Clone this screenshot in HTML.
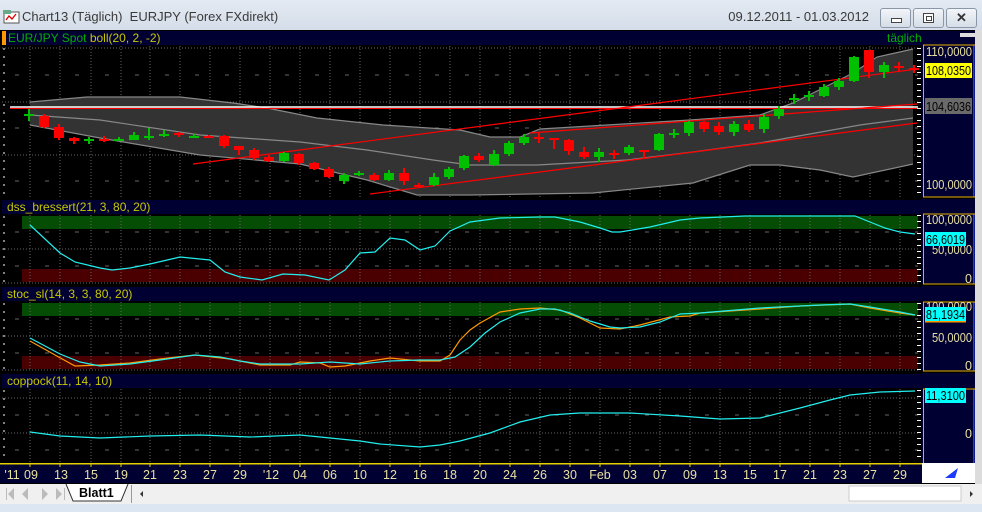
<!DOCTYPE html>
<html><head><meta charset="utf-8"><style>
body{margin:0;width:982px;height:512px;overflow:hidden;background:#dfe6ee;font-family:"Liberation Sans",sans-serif}
.t{position:absolute;left:0;top:0;width:982px;height:31px;background:linear-gradient(#e4eaf2,#d4dde9)}
.btn{position:absolute;top:8px;width:29px;height:18px;border:1px solid #8a97a8;border-radius:3px;background:linear-gradient(#f2f5f9,#d6dde7)}
</style></head><body>
<div class="t">
<svg style="position:absolute;left:3px;top:9px" width="18" height="16"><rect x="1" y="3" width="15" height="11" fill="#fff" stroke="#555"/><polyline points="3,11 6,7 9,10 13,5" fill="none" stroke="#d00" stroke-width="1.3"/><rect x="0" y="1" width="8" height="4" fill="#6a8"/></svg>
<div style="position:absolute;left:22px;top:9px;font-size:13px;color:#3a3a3a">Chart13 (Täglich)&nbsp; EURJPY (Forex FXdirekt)</div>
<div style="position:absolute;right:113px;top:9px;font-size:13px;color:#3a3a3a">09.12.2011 - 01.03.2012</div>
<div class="btn" style="left:880px"><div style="position:absolute;left:10px;top:9px;width:9px;height:3px;border:1px solid #444;background:#fff"></div></div>
<div class="btn" style="left:913px"><div style="position:absolute;left:9px;top:4px;width:9px;height:8px;border:1px solid #444;background:#fff"></div><div style="position:absolute;left:12px;top:7px;width:4px;height:3px;border:1px solid #444"></div></div>
<div class="btn" style="left:946px;font-size:13px;font-weight:bold;color:#333;text-align:center;line-height:18px">✕</div>
</div>
<svg style="position:absolute;left:0;top:30px" width="982" height="482" viewBox="0 30 982 482" font-family="Liberation Sans, sans-serif" font-size="12">
<rect x="0" y="30" width="982" height="454" fill="#000"/>
<rect x="975" y="30" width="7" height="454" fill="#dcdcdc"/>
<rect x="2" y="31" width="973" height="14" fill="#000033"/>
<rect x="2" y="31" width="4" height="14" fill="#f90"/>
<text x="8" y="42" fill="#00b000">EUR/JPY Spot <tspan fill="#c8c800">boll(20, 2, -2)</tspan></text>
<text x="887" y="42" fill="#00b000">täglich</text>
<rect x="960" y="33" width="15" height="4" fill="#ddd"/>
<rect x="2" y="200" width="920" height="14" fill="#000033"/>
<text x="7" y="211" fill="#c8c800">dss_bressert(21, 3, 80, 20)</text>
<rect x="2" y="287" width="920" height="14" fill="#000033"/>
<text x="7" y="298" fill="#c8c800">stoc_sl(14, 3, 3, 80, 20)</text>
<rect x="2" y="374" width="920" height="14" fill="#000033"/>
<text x="7" y="385" fill="#c8c800">coppock(11, 14, 10)</text>
<rect x="22" y="216" width="896" height="13" fill="#054d05"/>
<rect x="22" y="269" width="896" height="13" fill="#4a0000"/>
<rect x="22" y="303" width="896" height="13" fill="#054d05"/>
<rect x="22" y="356" width="896" height="13" fill="#4a0000"/>
<g stroke="#666" stroke-dasharray="1,2" stroke-width="1">
<path d="M30 46V198M60 46V198M91 46V198M121 46V198M150 46V198M180 46V198M210 46V198M240 46V198M270 46V198M300 46V198M330 46V198M360 46V198M390 46V198M420 46V198M450 46V198M480 46V198M510 46V198M540 46V198M570 46V198M600 46V198M630 46V198M660 46V198M690 46V198M720 46V198M750 46V198M780 46V198M810 46V198M840 46V198M870 46V198M900 46V198"/>
<path d="M30 215V284M60 215V284M91 215V284M121 215V284M150 215V284M180 215V284M210 215V284M240 215V284M270 215V284M300 215V284M330 215V284M360 215V284M390 215V284M420 215V284M450 215V284M480 215V284M510 215V284M540 215V284M570 215V284M600 215V284M630 215V284M660 215V284M690 215V284M720 215V284M750 215V284M780 215V284M810 215V284M840 215V284M870 215V284M900 215V284"/>
<path d="M30 302V371M60 302V371M91 302V371M121 302V371M150 302V371M180 302V371M210 302V371M240 302V371M270 302V371M300 302V371M330 302V371M360 302V371M390 302V371M420 302V371M450 302V371M480 302V371M510 302V371M540 302V371M570 302V371M600 302V371M630 302V371M660 302V371M690 302V371M720 302V371M750 302V371M780 302V371M810 302V371M840 302V371M870 302V371M900 302V371"/>
<path d="M30 389V462M60 389V462M91 389V462M121 389V462M150 389V462M180 389V462M210 389V462M240 389V462M270 389V462M300 389V462M330 389V462M360 389V462M390 389V462M420 389V462M450 389V462M480 389V462M510 389V462M540 389V462M570 389V462M600 389V462M630 389V462M660 389V462M690 389V462M720 389V462M750 389V462M780 389V462M810 389V462M840 389V462M870 389V462M900 389V462"/>
<path d="M2 48H918M2 102H918M2 155H918M2 249H918M2 283H918M2 336H918M2 370H918M2 398H918M2 433H918"/>
</g>
<g stroke="#666" stroke-dasharray="4,26" stroke-dashoffset="-13"><path d="M2 75H918M2 128H918M2 181H918M2 232H918M2 266H918M2 319H918M2 353H918M2 415H918M2 450H918"/></g>
<polygon points="30,102 87,97 180,97 233,103 267,108 317,118 383,125 460,130 490,137 520,137 540,129 690,120 760,115 793,103 853,73 877,57 913,49 913,164 853,177 820,170 780,165 750,165 693,183 593,193 470,195 417,195 367,180 300,164 200,155 100,138 30,125" fill="#333"/>
<g fill="none" stroke="#888" stroke-width="1.2">
<polyline points="30,102 87,97 180,97 233,103 267,108 317,118 383,125 460,130 490,137 520,137 540,129 690,120 760,115 793,103 853,73 877,57 913,49"/>
<polyline points="30,115 100,120 200,135 300,142 367,150 433,160 470,165 537,165 627,160 693,152 760,143 793,137 860,125 913,118"/>
<polyline points="30,125 100,138 200,155 300,164 367,180 417,195 470,195 593,193 693,183 750,165 780,165 820,170 853,177 913,164"/>
</g>
<line x1="10" y1="107" x2="918" y2="107" stroke="#fff" stroke-width="1.5"/>
<line x1="10" y1="108.5" x2="918" y2="108.5" stroke="#f00" stroke-width="1"/>
<g stroke="#f00" stroke-width="1.2">
<line x1="193" y1="164" x2="917" y2="69"/>
<line x1="370" y1="194" x2="917" y2="123"/>
<line x1="530" y1="133" x2="917" y2="104"/>
</g>
<g fill="#00c000" stroke="none">
<rect x="28" y="109" width="2" height="12"/><rect x="24" y="114" width="10" height="2"/>
<rect x="88" y="137" width="2" height="7"/><rect x="84" y="139" width="10" height="2"/>
<rect x="118" y="137" width="2" height="4"/><rect x="114" y="139" width="10" height="2"/>
<rect x="133" y="132" width="2" height="8"/><rect x="129" y="135" width="10" height="5"/>
<rect x="148" y="128" width="2" height="12"/><rect x="144" y="136" width="10" height="2"/>
<rect x="163" y="130" width="2" height="7"/><rect x="159" y="134" width="10" height="2"/>
<rect x="193" y="134" width="2" height="4"/><rect x="189" y="136" width="10" height="2"/>
<rect x="283" y="152" width="2" height="10"/><rect x="279" y="153" width="10" height="8"/>
<rect x="343" y="173" width="2" height="11"/><rect x="339" y="175" width="10" height="6"/>
<rect x="358" y="171" width="2" height="5"/><rect x="354" y="173" width="10" height="2"/>
<rect x="388" y="170" width="2" height="11"/><rect x="384" y="173" width="10" height="7"/>
<rect x="433" y="173" width="2" height="13"/><rect x="429" y="177" width="10" height="8"/>
<rect x="448" y="167" width="2" height="12"/><rect x="444" y="169" width="10" height="8"/>
<rect x="463" y="155" width="2" height="15"/><rect x="459" y="156" width="10" height="12"/>
<rect x="493" y="150" width="2" height="16"/><rect x="489" y="154" width="10" height="11"/>
<rect x="508" y="141" width="2" height="15"/><rect x="504" y="143" width="10" height="11"/>
<rect x="523" y="134" width="2" height="11"/><rect x="519" y="137" width="10" height="6"/>
<rect x="598" y="148" width="2" height="14"/><rect x="594" y="152" width="10" height="5"/>
<rect x="628" y="145" width="2" height="10"/><rect x="624" y="147" width="10" height="6"/>
<rect x="658" y="133" width="2" height="18"/><rect x="654" y="134" width="10" height="16"/>
<rect x="673" y="129" width="2" height="9"/><rect x="669" y="133" width="10" height="2"/>
<rect x="688" y="121" width="2" height="15"/><rect x="684" y="122" width="10" height="11"/>
<rect x="733" y="121" width="2" height="15"/><rect x="729" y="124" width="10" height="8"/>
<rect x="763" y="114" width="2" height="19"/><rect x="759" y="117" width="10" height="12"/>
<rect x="778" y="106" width="2" height="13"/><rect x="774" y="109" width="10" height="7"/>
<rect x="793" y="94" width="2" height="10"/><rect x="789" y="98" width="10" height="2"/>
<rect x="808" y="91" width="2" height="10"/><rect x="804" y="95" width="10" height="2"/>
<rect x="823" y="84" width="2" height="13"/><rect x="819" y="87" width="10" height="9"/>
<rect x="838" y="78" width="2" height="12"/><rect x="834" y="81" width="10" height="6"/>
<rect x="853" y="56" width="2" height="26"/><rect x="849" y="57" width="10" height="24"/>
<rect x="883" y="62" width="2" height="16"/><rect x="879" y="65" width="10" height="7"/>
</g>
<g fill="#f00">
<rect x="43" y="114" width="2" height="14"/><rect x="39" y="116" width="10" height="11"/>
<rect x="58" y="124" width="2" height="16"/><rect x="54" y="127" width="10" height="11"/>
<rect x="73" y="137" width="2" height="7"/><rect x="69" y="138" width="10" height="3"/>
<rect x="103" y="136" width="2" height="6"/><rect x="99" y="139" width="10" height="2"/>
<rect x="178" y="132" width="2" height="5"/><rect x="174" y="133" width="10" height="2"/>
<rect x="208" y="135" width="2" height="3"/><rect x="204" y="136" width="10" height="2"/>
<rect x="223" y="135" width="2" height="13"/><rect x="219" y="136" width="10" height="10"/>
<rect x="238" y="146" width="2" height="9"/><rect x="234" y="146" width="10" height="4"/>
<rect x="253" y="148" width="2" height="12"/><rect x="249" y="150" width="10" height="8"/>
<rect x="268" y="155" width="2" height="7"/><rect x="264" y="157" width="10" height="4"/>
<rect x="298" y="153" width="2" height="12"/><rect x="294" y="154" width="10" height="9"/>
<rect x="313" y="162" width="2" height="8"/><rect x="309" y="163" width="10" height="6"/>
<rect x="328" y="167" width="2" height="11"/><rect x="324" y="169" width="10" height="8"/>
<rect x="373" y="173" width="2" height="8"/><rect x="369" y="175" width="10" height="5"/>
<rect x="403" y="168" width="2" height="17"/><rect x="399" y="173" width="10" height="8"/>
<rect x="418" y="183" width="2" height="5"/><rect x="414" y="185" width="10" height="2"/>
<rect x="478" y="153" width="2" height="9"/><rect x="474" y="156" width="10" height="4"/>
<rect x="538" y="132" width="2" height="11"/><rect x="534" y="137" width="10" height="2"/>
<rect x="553" y="138" width="2" height="11"/><rect x="549" y="138" width="10" height="2"/>
<rect x="568" y="139" width="2" height="16"/><rect x="564" y="140" width="10" height="11"/>
<rect x="583" y="147" width="2" height="12"/><rect x="579" y="152" width="10" height="5"/>
<rect x="613" y="150" width="2" height="9"/><rect x="609" y="153" width="10" height="2"/>
<rect x="643" y="150" width="2" height="8"/><rect x="639" y="150" width="10" height="2"/>
<rect x="703" y="121" width="2" height="11"/><rect x="699" y="122" width="10" height="7"/>
<rect x="718" y="122" width="2" height="13"/><rect x="714" y="126" width="10" height="6"/>
<rect x="748" y="120" width="2" height="12"/><rect x="744" y="124" width="10" height="6"/>
<rect x="868" y="50" width="2" height="28"/><rect x="864" y="50" width="10" height="22"/>
<rect x="898" y="62" width="2" height="9"/><rect x="894" y="66" width="10" height="2"/>
<rect x="913" y="65" width="2" height="8"/><rect x="909" y="68" width="10" height="2"/>
</g>
<g fill="none" stroke-width="1.2">
<polyline stroke="#2ee" points="30,225 60,253 75,262 100,268 112,270 130,268 150,264 180,257 210,260 225,272 240,277 262,280 283,274 305,275 329,280 345,270 360,253 375,252 390,238 405,240 420,250 435,246 450,231 470,222 500,218 540,217 555,217 580,222 600,228 612,232 620,232 650,227 680,220 700,218 745,216 855,216 870,222 885,228 900,232 915,234"/>
<polyline stroke="#f90" points="30,341 55,355 75,366 100,365 130,363 160,359 195,355 230,359 260,365 290,365 300,362 320,363 330,367 345,366 370,361 390,358 420,361 440,361 450,355 460,340 470,330 480,323 500,312 520,309 540,308 560,310 580,318 600,328 620,329 640,325 670,317 690,316 700,313 760,309 800,306 850,304 870,308 900,313 915,315"/>
<polyline stroke="#2ee" points="30,338 60,354 80,362 100,366 130,364 160,360 195,355 220,357 240,361 260,364 300,364 330,362 360,364 390,361 420,360 440,360 455,357 470,347 485,333 500,322 520,313 540,309 555,309 570,313 590,321 610,327 620,328 640,327 660,322 680,314 700,313 760,308 820,305 850,304 870,307 900,312 915,315"/>
<polyline stroke="#2ee" points="30,432 60,436 100,438 150,436 200,435 250,437 300,435 320,437 360,441 380,444 420,447 440,445 460,441 490,433 520,422 550,415 580,413 630,413 680,416 720,419 760,418 800,408 830,400 850,395 880,392 915,391"/>
</g>
<g stroke="#fff" stroke-dasharray="2,6"><path d="M4 48V198M4 216V284M4 303V371M4 390V462"/></g>
<rect x="922" y="45" width="53" height="418" fill="#000033"/>
<rect x="923" y="45" width="1" height="418" fill="#e8b000"/>
<rect x="973" y="45" width="1.5" height="418" fill="#1a3aff"/>
<g fill="#000"><rect x="922" y="197" width="53" height="17"/><rect x="922" y="284" width="53" height="18"/><rect x="922" y="371" width="53" height="18"/></g>
<g fill="#000033"><rect x="922" y="199" width="53" height="15"/><rect x="922" y="286" width="53" height="15"/><rect x="922" y="373" width="53" height="15"/></g>
<g stroke="#e8b000"><path d="M923 45H975M923 197H975M923 214H975M923 284H975M923 302H975M923 371H975M923 389H975"/></g>
<g stroke="#fff" stroke-width="4" stroke-dasharray="1,5" fill="none"><path d="M919 48V197M919 215V284M919 303V371M919 390V462"/></g>
<g fill="#e8e0a0" font-size="12.5">
<text x="926" y="56" textLength="46" lengthAdjust="spacingAndGlyphs">110,0000</text>
<text x="926" y="189" textLength="46" lengthAdjust="spacingAndGlyphs">100,0000</text>
<text x="926" y="224" textLength="46" lengthAdjust="spacingAndGlyphs">100,0000</text>
<text x="932" y="254" textLength="40" lengthAdjust="spacingAndGlyphs">50,0000</text>
<text x="965" y="283">0</text>
<text x="926" y="311" textLength="46" lengthAdjust="spacingAndGlyphs">100,0000</text>
<text x="932" y="342" textLength="40" lengthAdjust="spacingAndGlyphs">50,0000</text>
<text x="965" y="370">0</text>
<text x="965" y="438">0</text>
</g>
<rect x="925" y="63" width="47" height="15" fill="#ffff00"/><text x="926" y="75" fill="#000" font-size="12.5" textLength="45" lengthAdjust="spacingAndGlyphs">108,0350</text>
<rect x="925" y="98" width="47" height="16" fill="#6a6a6a"/><text x="926" y="111" fill="#000" font-size="12.5" textLength="45" lengthAdjust="spacingAndGlyphs">104,6036</text>
<rect x="925" y="232" width="41" height="14" fill="#00ffff"/><text x="926" y="244" fill="#000" font-size="12.5" textLength="39" lengthAdjust="spacingAndGlyphs">66,6019</text>
<rect x="925" y="307" width="41" height="15" fill="#00ffff"/><rect x="925" y="321" width="41" height="1.5" fill="#f90"/><text x="926" y="319" fill="#000" font-size="12.5" textLength="39" lengthAdjust="spacingAndGlyphs">81,1934</text>
<rect x="925" y="388" width="41" height="15" fill="#00ffff"/><text x="926" y="400" fill="#000" font-size="12.5" textLength="39" lengthAdjust="spacingAndGlyphs">11,3100</text>
<rect x="0" y="463" width="922" height="20" fill="#000033"/>
<rect x="0" y="463" width="922" height="1.5" fill="#e8d000"/>
<g stroke="#e8d000"><path d="M30 463v4M60 463v4M91 463v4M121 463v4M150 463v4M180 463v4M210 463v4M240 463v4M270 463v4M300 463v4M330 463v4M360 463v4M390 463v4M420 463v4M450 463v4M480 463v4M510 463v4M540 463v4M570 463v4M600 463v4M630 463v4M660 463v4M690 463v4M720 463v4M750 463v4M780 463v4M810 463v4M840 463v4M870 463v4M900 463v4"/></g>
<g fill="#e8e0a0" font-size="12.5" text-anchor="middle">
<text x="12" y="479">'11</text><text x="31" y="479">09</text><text x="61" y="479">13</text><text x="91" y="479">15</text><text x="121" y="479">19</text><text x="150" y="479">21</text><text x="180" y="479">23</text><text x="210" y="479">27</text><text x="240" y="479">29</text><text x="271" y="479">'12</text><text x="300" y="479">04</text><text x="330" y="479">06</text><text x="360" y="479">10</text><text x="390" y="479">12</text><text x="420" y="479">16</text><text x="450" y="479">18</text><text x="480" y="479">20</text><text x="510" y="479">24</text><text x="540" y="479">26</text><text x="570" y="479">30</text><text x="600" y="479">Feb</text><text x="630" y="479">03</text><text x="660" y="479">07</text><text x="690" y="479">09</text><text x="720" y="479">13</text><text x="750" y="479">15</text><text x="780" y="479">17</text><text x="810" y="479">21</text><text x="840" y="479">23</text><text x="870" y="479">27</text><text x="900" y="479">29</text>
</g>
<rect x="922" y="463" width="53" height="20" fill="#fff"/>
<path d="M945 478 L958 468 L955 478 Z" fill="#1a3aff"/>
<rect x="0" y="484" width="982" height="20" fill="#f0f0f0"/>
<rect x="0" y="504" width="982" height="8" fill="#dce6f2"/>
<g fill="#bbb"><path d="M8 494l6-6v12zM22 494l6-6v12zM42 488l6 6-6 6zM56 488l6 6-6 6z"/></g>
<g stroke="#bbb"><path d="M6.5 488v12M64.5 488v12"/></g>
<path d="M66 484 L73 501 L121 501 L128 484" fill="#fff" stroke="#333"/>
<text x="79" y="497" fill="#000" font-size="12.5" font-weight="bold">Blatt1</text>
<rect x="131" y="485" width="1" height="18" fill="#999"/>
<path d="M143 491l-3 3 3 3z" fill="#333"/>
<rect x="849" y="486" width="112" height="15" fill="#fff" stroke="#ccc"/>
<path d="M970 491l3 3-3 3z" fill="#333"/>
</svg>
</body></html>
